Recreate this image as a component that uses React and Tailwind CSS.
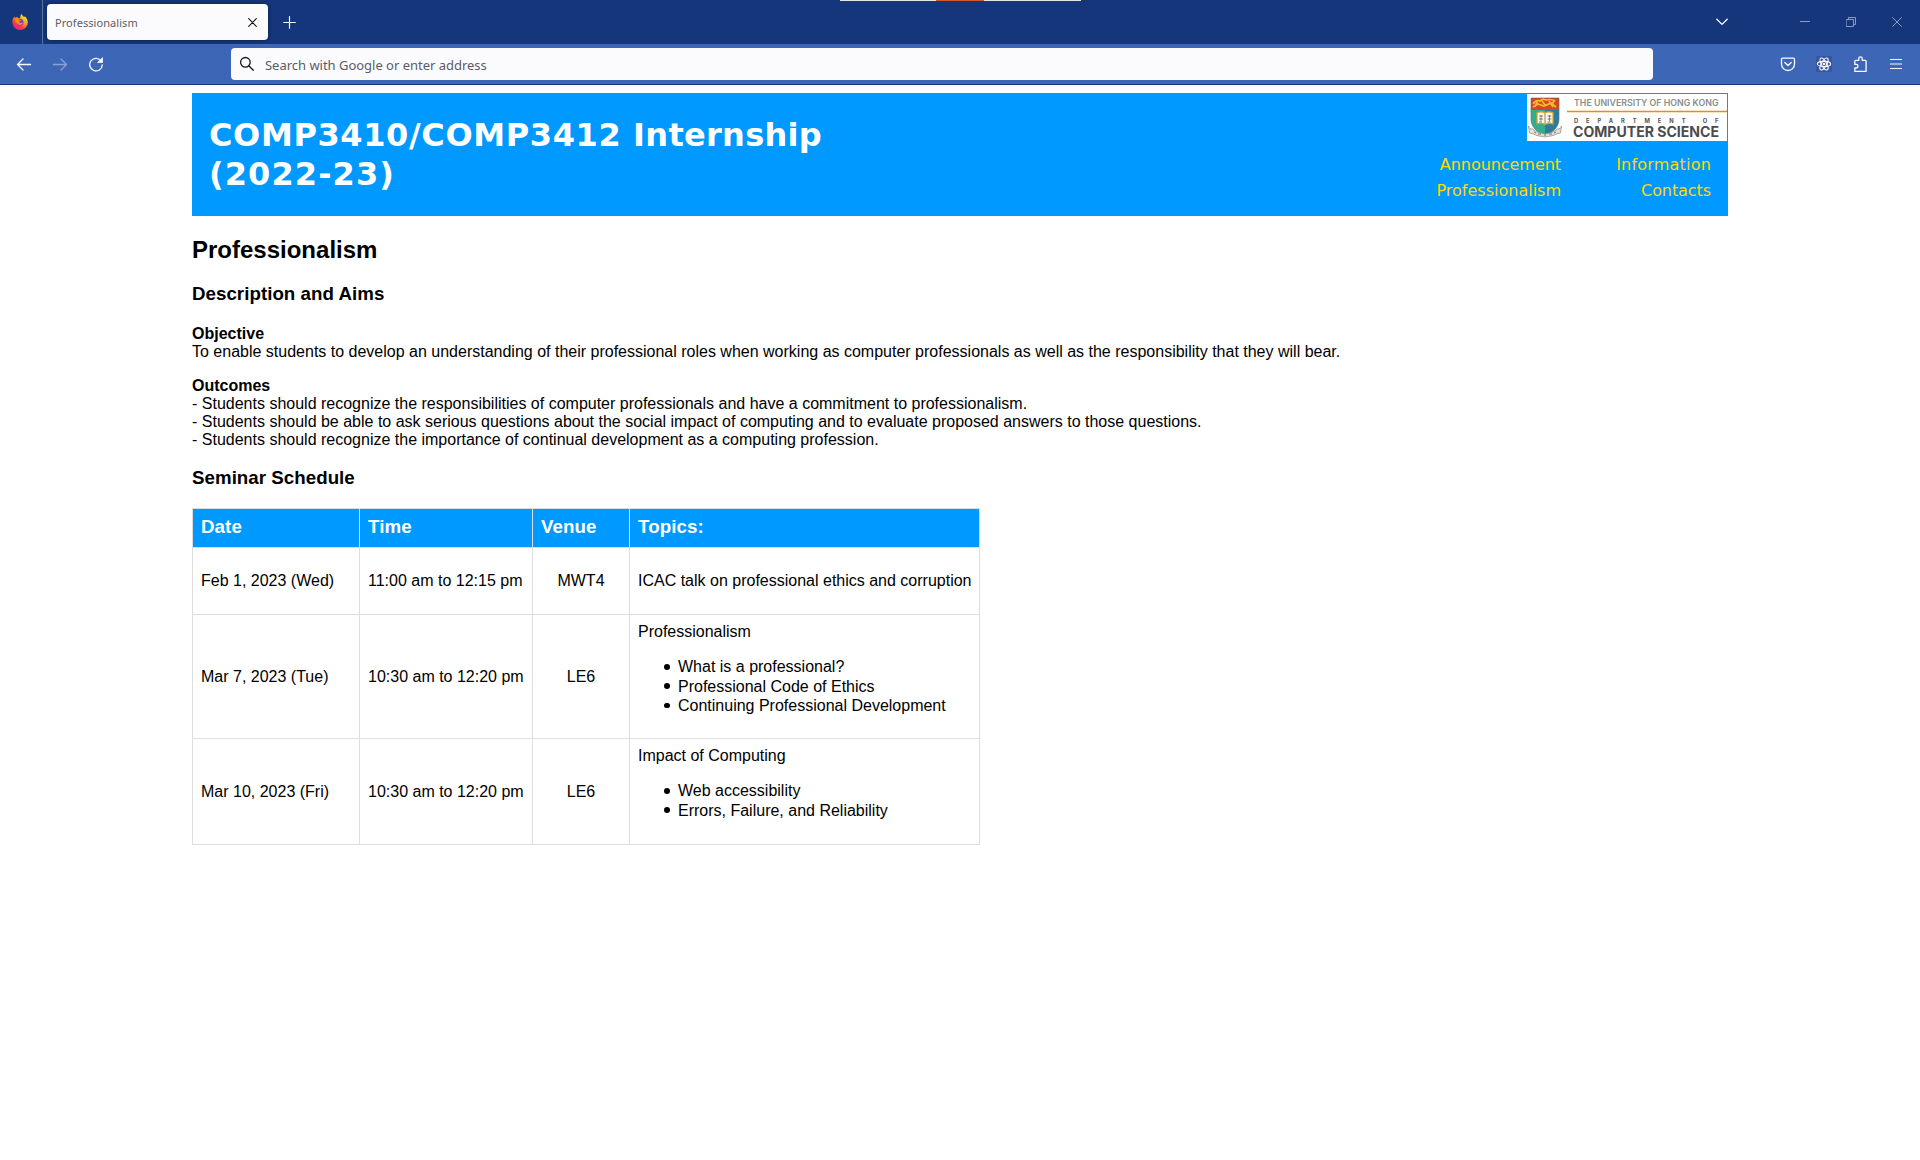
const svgBase = { fill: "none", stroke: "currentColor", strokeLinecap: "round", strokeLinejoin: "round" };

function Firefox() {
  return (
    <svg width="16" height="16" viewBox="0 0 16 16">
      <defs>
        <linearGradient id="flame" x1="0.85" y1="0.05" x2="0.2" y2="1">
          <stop offset="0" stopColor="#fff44f" />
          <stop offset="0.4" stopColor="#ff980e" />
          <stop offset="0.7" stopColor="#ff3647" />
          <stop offset="1" stopColor="#e31587" />
        </linearGradient>
      </defs>
      <path d="M1.2 4.2 2.4 2.6l.4 1.2C3.6 3.2 4.6 3 5.4 3.2L7 4.6l1.4-1C8.2 2 8.8.8 9.8 0c.2 1.5 1.4 2.2 2.4 3.2l.6-1c1.8 1.6 3 3.8 3 6.2a7.7 7.6 0 0 1-15.4.2C.2 6.800.5 5.400 1.200 4.200z" fill="url(#flame)" />
      <circle cx="8" cy="8.300" r="3.500" fill="#7a3fd8" />
      <path d="M3 5.300c1.600-.8 3-.4 4 .4l2 .4c-.3 1-1.500 1-1.900 1.500-.2.900.3 1.500 1.400 1.500 1 0 1.600-.7 2.500-.3-.7 1.700-2.200 2.400-3.700 2C5 10.400 4 8.500 3 5.300z" fill="#ff8a16" />
    </svg>
  );
}

function TabStrip() {
  return (
    <div className="relative flex h-11 items-center bg-[#15367b] text-[#fbfbfe]">
      <div className="absolute left-[840px] top-0 flex h-px w-[241px] bg-[#e4e4e4]">
        <div className="ml-24 w-12 bg-[#cf5a2c]" />
      </div>
      <div className="flex h-11 w-[43px] items-center border-r border-[#5b72a3] pl-3">
        <Firefox />
      </div>
      <div className="ml-1 flex h-9 w-[221px] items-center justify-between rounded bg-[#fbfbfe] pl-2 pr-[11.5px] shadow-[0_0_4px_rgba(0,0,0,0.4)]">
        <span className="mt-px whitespace-nowrap font-['Noto_Sans','Open_Sans',sans-serif] text-[11px] leading-4 tracking-[0.06px] text-[#5b5b66]">Professionalism</span>
        <svg width="9" height="9" viewBox="0 0 9 9" className="text-[#15141a]" {...svgBase} strokeWidth="1.100">
          <path d="M.7.7l7.600 7.600M8.300.7L.7 8.300" />
        </svg>
      </div>
      <svg width="13" height="13" viewBox="0 0 13 13" className="ml-[15px] mt-px" {...svgBase} strokeWidth="1.200">
        <path d="M6.500 .7v11.600M.7 6.500h11.600" />
      </svg>
      <div className="ml-auto flex items-center text-[#8b9bc0]">
        <svg width="12" height="8" viewBox="0 0 12 8" className="mr-[72px] text-[#fbfbfe]" {...svgBase} strokeWidth="1.300">
          <path d="M.8 1.200 6 6.400l5.200-5.200" />
        </svg>
        <svg width="10" height="10" viewBox="0 0 10 10" className="mr-9" {...svgBase} strokeWidth="1">
          <path d="M0 4.500h10" />
        </svg>
        <svg width="10" height="10" viewBox="0 0 10 10" className="mr-9" {...svgBase} strokeWidth="1">
          <path d="M.5 2.500h7v7h-7zM2.500 2.500v-2h7v7h-2" />
        </svg>
        <svg width="10" height="10" viewBox="0 0 10 10" className="mr-[18px]" {...svgBase} strokeWidth="1">
          <path d="M.5.5l9 9M9.500.5l-9 9" />
        </svg>
      </div>
    </div>
  );
}

function Toolbar() {
  return (
    <div className="flex h-[41px] items-center border-b border-[#15367b] bg-[#3e66b7] text-[#fbfbfe]">
      <svg width="16" height="16" viewBox="0 0 16 16" className="ml-4" {...svgBase} strokeWidth="1.300">
        <path d="M14.500 8.500H1.500M7 3 1.500 8.500 7 14" />
      </svg>
      <svg width="16" height="16" viewBox="0 0 16 16" className="ml-5 text-[#8ba3d4]" {...svgBase} strokeWidth="1.300">
        <path d="M1.500 8.500h13M9 3l5.500 5.500L9 14" />
      </svg>
      <svg width="16" height="16" viewBox="0 0 16 16" className="ml-5" {...svgBase} strokeWidth="1.300">
        <path d="M13.300 5.200A6.300 6.300 0 1 0 14.300 9" />
        <path d="M14.500 2v4.500H10z" fill="currentColor" strokeWidth=".8" />
      </svg>
      <div className="ml-[127px] flex h-8 w-[1422px] items-center rounded bg-[#fbfbfe]">
        <svg width="16" height="16" viewBox="0 0 16 16" className="ml-2 text-[#15141a]" {...svgBase} strokeWidth="1.300">
          <circle cx="6.400" cy="6.300" r="4.800" />
          <path d="m10 10 4.300 4.300" />
        </svg>
        <span className="ml-[10px] mt-px whitespace-nowrap font-['Noto_Sans','Open_Sans',sans-serif] text-[13px] leading-5 tracking-[-0.02px] text-[#5b5b66]">Search with Google or enter address</span>
      </div>
      <div className="ml-auto mr-[17px] flex items-center">
        <svg width="16" height="16" viewBox="0 0 16 16" className="mr-5" {...svgBase} strokeWidth="1.300">
          <path d="M2.700 2.200h10.600c.7 0 1.200.5 1.200 1.200V8a6.500 6.500 0 0 1-13 0V3.400c0-.7.5-1.200 1.200-1.200z" />
          <path d="m4.800 6.500 3.200 3 3.200-3" />
        </svg>
        <div className="mr-5 flex size-4 items-center justify-center bg-[#3a579e]">
          <svg width="16" height="16" viewBox="0 0 16 16" {...svgBase} strokeWidth="1.100">
            <ellipse cx="8" cy="8" rx="6.600" ry="2.600" />
            <ellipse cx="8" cy="8" rx="6.600" ry="2.600" transform="rotate(60 8 8)" />
            <ellipse cx="8" cy="8" rx="6.600" ry="2.600" transform="rotate(120 8 8)" />
            <circle cx="8" cy="8" r=".8" fill="currentColor" />
          </svg>
        </div>
        <svg width="16" height="16" viewBox="0 0 16 16" className="mr-[21px]" {...svgBase} strokeWidth="1.300">
          <path d="M2.800 15.300V12h1.400a1.800 1.800 0 0 0 0-3.600H2.800V5.200c0-.5.4-.9.900-.9h3.100V2.500a1.700 1.700 0 0 1 3.400 0v1.800h3c.5 0 .9.4.9.9v10.100z" />
        </svg>
        <svg width="14" height="16" viewBox="0 0 14 16" {...svgBase} strokeWidth="1.200">
          <path d="M1.500 3.500h11M1.500 8h11M1.500 12.500h11" />
        </svg>
      </div>
    </div>
  );
}

function DepartmentLogo() {
  return (
    <svg width="200" height="47" viewBox="0 0 200 47" fontFamily="Inter, Liberation Sans, sans-serif">
      <rect width="200" height="47" fill="#fff" />
      <path d="M4 4h28v12H4z" fill="#d8432a" />
      <path d="M6 10c2-3 4-4 7-3l3-2 3 1c4-1 6-1 9 1M6 13l5-3 6 2 7-3 5 4M10 8l-2 5M15 7l4 5M22 7l4 6M28 6l-3 4" fill="none" stroke="#f5bd2e" strokeWidth="1.700" />
      <path d="M18 16v26C10 38 4 33 4 25v-9z" fill="#2fae92" />
      <path d="M18 16h14v9c0 8-6 13-14 17z" fill="#2a7d9c" />
      <path d="M4 4h28v21c0 8-6 13-14 17C10 38 4 33 4 25z" fill="none" stroke="#5a6b58" strokeWidth=".6" />
      <path d="M10 18.500c3-1 5-1 8 0 3-1 5-1 8 0v11.500c-3-1-5-1-8 .5-3-1.500-5-1.500-8-.5z" fill="#fdf8e2" stroke="#d79c2a" strokeWidth="1.200" />
      <path d="M18 19v11M12 22h4M12 25h4M12 28h3M20.500 22h4M20.500 25h4M20.500 28h3M14 21v6M22.500 21v6" stroke="#6d6554" strokeWidth=".8" />
      <path d="M1.500 32c0 2 2 3 4 3 3 3 8 4 12.500 5 4.500-1 9.500-2 12.500-5 2 0 4-1 4-3l-1 7-4 1c-3 2-7 2-11.500 3-4.500-1-8.500-1-11.500-3l-4-1z" fill="#e2e0dc" stroke="#8c8882" strokeWidth=".7" />
      <path d="M7 38l2 1M11 40h3M17 41h2M22 40h3M27 39l2-1" stroke="#77736d" strokeWidth="1" />
      <text x="47" y="12" fontSize="9" fontWeight="600" fill="#8c8c8c" textLength="144.500" lengthAdjust="spacingAndGlyphs">THE UNIVERSITY OF HONG KONG</text>
      <path d="M40 17.500h160" stroke="#f08c00" strokeWidth="1.500" />
      <text x="47" y="28.500" fontSize="5.800" fontWeight="700" fill="#555" textLength="144.500">DEPARTMENT OF</text>
      <text x="46" y="43" fontSize="14" fontWeight="700" fill="#4c4c4c" textLength="146" lengthAdjust="spacingAndGlyphs">COMPUTER SCIENCE</text>
    </svg>
  );
}

function Banner() {
  return (
    <header className="flex h-[123px] justify-between bg-[#0099ff] font-['DejaVu_Sans',sans-serif]">
      <h1 className="ml-[17px] mt-[23px] whitespace-nowrap text-[32px] font-bold leading-[39px] text-white">
        <span className="tracking-[0.62px]">COMP3410/COMP3412 </span>
        <span className="tracking-[0.3px]">Internship</span>
        <br />
        <span className="tracking-[1.1px]">(2022-23)</span>
      </h1>
      <div className="flex flex-col items-end pr-px pt-px">
        <DepartmentLogo />
        <nav className="mr-4 mt-[11px] grid grid-cols-[auto_150px] text-right text-base leading-[26px] text-[#ffd800]">
          <a className="tracking-[-0.05px]">Announcement</a>
          <a className="tracking-[0.2px]">Information</a>
          <a>Professionalism</a>
          <a className="tracking-[-0.08px]">Contacts</a>
        </nav>
      </div>
    </header>
  );
}

const rows = [
  { date: "Feb 1, 2023 (Wed)", time: "11:00 am to 12:15 pm", venue: "MWT4", topic: "ICAC talk on professional ethics and corruption", height: "h-[67px]" },
  {
    date: "Mar 7, 2023 (Tue)", time: "10:30 am to 12:20 pm", venue: "LE6", topic: "Professionalism", height: "h-[124px]",
    items: ["What is a professional?", "Professional Code of Ethics", "Continuing Professional Development"],
  },
  {
    date: "Mar 10, 2023 (Fri)", time: "10:30 am to 12:20 pm", venue: "LE6", topic: "Impact of Computing", height: "h-[106px]",
    items: ["Web accessibility", "Errors, Failure, and Reliability"],
  },
];

const columns = "grid grid-cols-[167px_173px_97px_350px]";
const cell = "flex items-center border-b border-r border-[#dddddd] pl-2";

function Schedule() {
  return (
    <div className="mt-5 w-[788px] border-l border-t border-[#dddddd] leading-[19.300px]">
      <div className={columns + " h-[39px] bg-[#0099ff] text-[18.720px] font-bold tracking-[0.1px] text-white"}>
        {["Date", "Time", "Venue", "Topics:"].map((t) => (
          <div key={t} className={cell + " pb-0.5"}>{t}</div>
        ))}
      </div>
      {rows.map((r) => (
        <div key={r.date} className={columns + " whitespace-nowrap " + r.height}>
          <div className={cell}>{r.date}</div>
          <div className={cell}>{r.time}</div>
          <div className="flex items-center justify-center border-b border-r border-[#dddddd]">{r.venue}</div>
          {r.items ? (
            <div className="border-b border-r border-[#dddddd] pl-2 pt-[7px]">
              {r.topic}
              <ul className="mt-4 pl-[26px]">
                {r.items.map((i) => (
                  <li key={i} className="flex items-center gap-2 before:mr-[0.5px] before:size-[5.5px] before:rounded-full before:bg-black">{i}</li>
                ))}
              </ul>
            </div>
          ) : (
            <div className={cell}>{r.topic}</div>
          )}
        </div>
      ))}
    </div>
  );
}

export default function App() {
  return (
    <div className="h-[1160px] w-[1920px] overflow-hidden bg-white font-['Liberation_Sans',sans-serif] text-base leading-[18px] text-black">
      <TabStrip />
      <Toolbar />
      <main className="mx-auto w-4/5 pt-2">
        <Banner />
        <h2 className="mt-5 text-2xl font-bold leading-[27px]">Professionalism</h2>
        <h3 className="mt-5 text-[18.720px] font-bold leading-[21px] tracking-[0.04px]">Description and Aims</h3>
        <p className="mt-[21px]">
          <b>Objective</b>
          <br />
          To enable students to develop an understanding of their professional roles when working as computer professionals as well as the responsibility that they will bear.
        </p>
        <p className="mt-4">
          <b>Outcomes</b>
          <br />- Students should recognize the responsibilities of computer professionals and have a commitment to professionalism.
          <br />- Students should be able to ask serious questions about the social impact of computing and to evaluate proposed answers to those questions.
          <br />- Students should recognize the importance of continual development as a computing profession.
        </p>
        <h3 className="mt-[18px] text-[18.720px] font-bold leading-[21px] tracking-[0.04px]">Seminar Schedule</h3>
        <Schedule />
      </main>
    </div>
  );
}
